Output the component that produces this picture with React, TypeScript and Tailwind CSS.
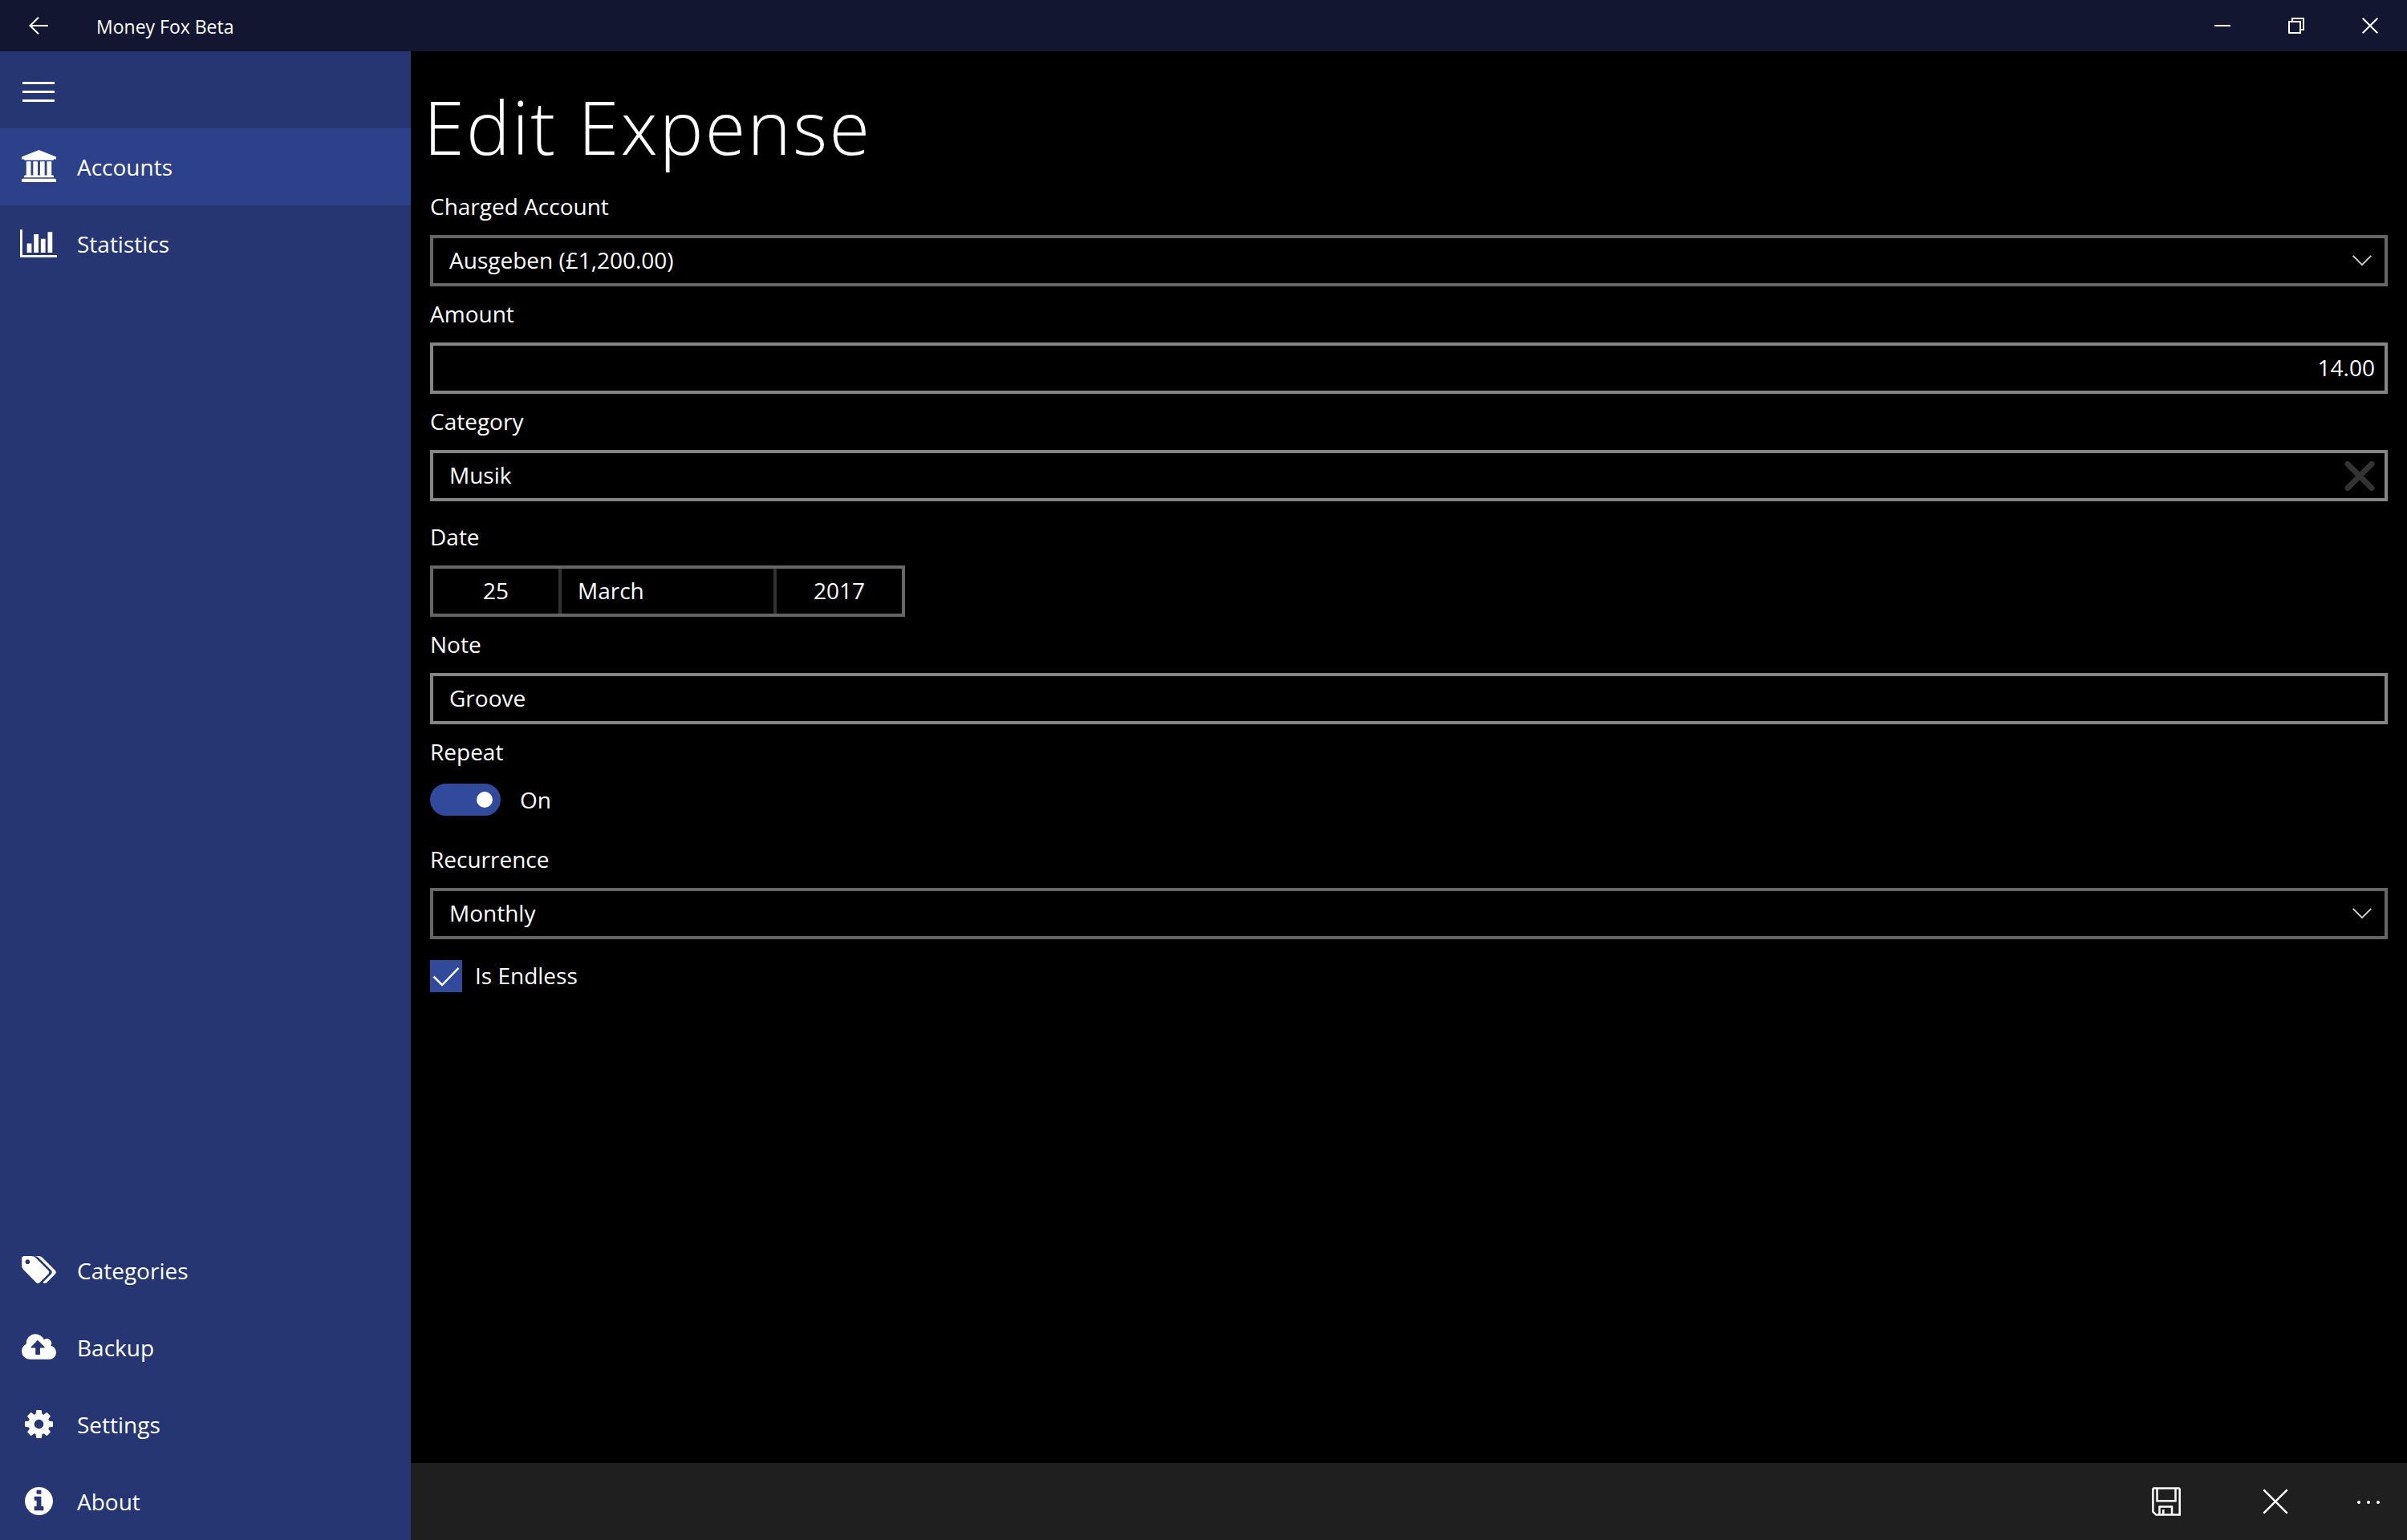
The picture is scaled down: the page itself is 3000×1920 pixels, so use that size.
import { useState, type ReactNode } from "react";

function Glyph({ box, path, className }: { box: string; path: string; className: string }) {
  return (
    <svg viewBox={box} className={className} fill="currentColor" aria-hidden="true">
      <path d={path} />
    </svg>
  );
}

const BankIcon = () => (
  <Glyph
    box="32 128 1920 1792"
    className="h-10 w-[43px]"
    path="M992 128l960 384v128h-128q0 26-20.5 45t-48.5 19h-1526q-28 0-48.5-19t-20.5-45h-128v-128zm-704 640h256v768h128v-768h256v768h128v-768h256v768h128v-768h256v768h59q28 0 48.5 19t20.5 45v64h-1664v-64q0-26 20.5-45t48.5-19h59v-768zm1595 960q28 0 48.5 19t20.5 45v128h-1920v-128q0-26 20.5-45t48.5-19h1782z"
  />
);

const ChartIcon = () => (
  <Glyph
    box="0 128 2048 1536"
    className="h-[35px] w-[46px]"
    path="M640 896v512h-256v-512h256zm384-512v1024h-256v-1024h256zm1024 1152v128h-2048v-1536h128v1408h1920zm-640-896v768h-256v-768h256zm384-384v1152h-256v-1152h256z"
  />
);

const TagsIcon = () => (
  <Glyph
    box="0 128 1899 1515"
    className="h-[34px] w-[43px]"
    path="M448 448q0-53-37.5-90.5t-90.5-37.5-90.5 37.5-37.5 90.5 37.5 90.5 90.5 37.5 90.5-37.5 37.5-90.5zm1067 576q0 53-37 90l-491 492q-39 37-91 37-53 0-90-37l-715-716q-38-37-64.5-101t-26.5-117v-416q0-52 38-90t90-38h416q53 0 117 26.5t102 64.5l715 714q37 39 37 91zm384 0q0 53-37 90l-491 492q-39 37-91 37-36 0-59-14t-53-45l470-470q37-37 37-90 0-52-37-91l-715-714q-38-38-102-64.5t-117-26.5h224q53 0 117 26.5t102 64.5l715 714q37 39 37 91z"
  />
);

const CloudIcon = () => (
  <Glyph
    box="0 128 1920 1408"
    className="h-8 w-[43px]"
    path="M1280 864q0-14-9-23l-352-352q-9-9-23-9t-23 9l-351 351q-10 12-10 24 0 14 9 23t23 9h224v352q0 13 9.5 22.5t22.5 9.5h192q13 0 22.5-9.5t9.5-22.5v-352h224q13 0 22.5-9.5t9.5-22.5zm640 288q0 159-112.5 271.5t-271.5 112.5h-1088q-185 0-316.5-131.5t-131.5-316.5q0-130 70-240t188-165q-2-30-2-43 0-212 150-362t362-150q156 0 285.5 87t188.5 231q71-62 166-62 106 0 181 75t75 181q0 76-41 138 130 31 213.5 135.5t83.5 238.5z"
  />
);

const CogIcon = () => (
  <Glyph
    box="128 128 1536 1536"
    className="h-[35px] w-[35px]"
    path="M1152 896q0-106-75-181t-181-75-181 75-75 181 75 181 181 75 181-75 75-181zm512-109v222q0 12-8 23t-20 13l-185 28q-19 54-39 91 35 50 107 138 10 12 10 25t-9 23q-27 37-99 108t-94 71q-12 0-26-9l-138-108q-44 23-91 38-16 136-29 186-7 28-36 28h-222q-14 0-24.5-8.5t-11.5-21.5l-28-184q-49-16-90-37l-141 107q-10 9-25 9-14 0-25-11-126-114-165-168-7-10-7-23 0-12 8-23 15-21 51-66.5t54-70.5q-27-50-41-99l-183-27q-13-2-21-12.5t-8-23.5v-222q0-12 8-23t19-13l186-28q14-46 39-92-40-57-107-138-10-12-10-24 0-10 9-23 26-36 98.5-107.5t94.5-71.5q13 0 26 10l138 107q44-23 91-38 16-136 29-186 7-28 36-28h222q14 0 24.5 8.5t11.5 21.5l28 184q49 16 90 37l142-107q9-9 24-9 13 0 25 10 129 119 165 170 7 8 7 22 0 12-8 23-15 21-51 66.5t-54 70.5q26 50 41 98l183 28q13 2 21 12.5t8 23.5z"
  />
);

const InfoIcon = () => (
  <Glyph
    box="128 128 1536 1536"
    className="h-[35px] w-[35px]"
    path="M1152 1376v-160q0-14-9-23t-23-9h-96v-512q0-14-9-23t-23-9h-320q-14 0-23 9t-9 23v160q0 14 9 23t23 9h96v320h-96q-14 0-23 9t-9 23v160q0 14 9 23t23 9h448q14 0 23-9t9-23zm-128-896v-160q0-14-9-23t-23-9h-192q-14 0-23 9t-9 23v160q0 14 9 23t23 9h192q14 0 23-9t9-23zm640 416q0 209-103 385.5t-279.5 279.5-385.5 103-385.5-103-279.5-279.5-103-385.5 103-385.5 279.5-279.5 385.5-103 385.5 103 279.5 279.5 103 385.5z"
  />
);

function NavItem({ icon, label, active = false }: { icon: ReactNode; label: string; active?: boolean }) {
  return (
    <li>
      <a
        href="#"
        aria-current={active ? "page" : undefined}
        className={active ? "flex h-24 items-center bg-[#2c418a]" : "flex h-24 items-center"}
      >
        <span className="flex w-24 shrink-0 justify-center pb-0.5">{icon}</span>
        <span>{label}</span>
      </a>
    </li>
  );
}

function TitleBar() {
  return (
    <header className="flex h-16 items-center bg-[#121630]">
      <button type="button" aria-label="Back" className="flex h-16 w-24 items-center justify-center">
        <svg viewBox="0 0 24 22" className="h-[22px] w-6" fill="none" stroke="currentColor" strokeWidth="2" aria-hidden="true">
          <path d="M24 11H1.500M12 .7 1.500 11 12 21.300" />
        </svg>
      </button>
      <span className="flex-1 pt-0.5 pl-6 text-[23px]">Money Fox Beta</span>
      <button type="button" aria-label="Minimize" className="flex h-16 w-[92px] items-center justify-center">
        <svg viewBox="0 0 20 20" className="h-5 w-5" fill="none" stroke="currentColor" strokeWidth="2" aria-hidden="true">
          <path d="M0 10h20" />
        </svg>
      </button>
      <button type="button" aria-label="Restore" className="flex h-16 w-[92px] items-center justify-center">
        <svg viewBox="0 0 20 20" className="h-5 w-5" fill="none" stroke="currentColor" strokeWidth="2" aria-hidden="true">
          <path d="M1 5h14v14H1zM5 5V1h14v14h-4" />
        </svg>
      </button>
      <button type="button" aria-label="Close" className="flex h-16 w-[92px] items-center justify-center">
        <svg viewBox="0 0 20 20" className="h-5 w-5" fill="none" stroke="currentColor" strokeWidth="2" aria-hidden="true">
          <path d="M.7.7l18.600 18.600M19.300.7.7 19.300" />
        </svg>
      </button>
    </header>
  );
}

function Sidebar() {
  return (
    <nav aria-label="Main" className="flex w-[512px] shrink-0 flex-col bg-[#263672]">
      <button type="button" aria-label="Toggle menu" className="flex h-24 w-24 items-center justify-center">
        <svg viewBox="0 0 40 30" className="h-[30px] w-10" fill="currentColor" aria-hidden="true">
          <path d="M0 5h40v3H0zM0 16h40v3H0zM0 27h40v3H0z" />
        </svg>
      </button>
      <ul>
        <NavItem icon={<BankIcon />} label="Accounts" active />
        <NavItem icon={<ChartIcon />} label="Statistics" />
      </ul>
      <ul className="mt-auto">
        <NavItem icon={<TagsIcon />} label="Categories" />
        <NavItem icon={<CloudIcon />} label="Backup" />
        <NavItem icon={<CogIcon />} label="Settings" />
        <NavItem icon={<InfoIcon />} label="About" />
      </ul>
    </nav>
  );
}

function Field({ id, label, children }: { id: string; label: string; children: ReactNode }) {
  return (
    <div className="flex flex-col gap-4">
      <label htmlFor={id} className="self-start pb-0.5 leading-9">
        {label}
      </label>
      {children}
    </div>
  );
}

function SelectBox({ id, options }: { id: string; options: string[] }) {
  return (
    <div className="relative">
      <select
        id={id}
        className="block h-16 w-full appearance-none rounded-none border-4 border-[#666666] bg-black px-5 pb-0.5 text-white"
      >
        {options.map((option) => (
          <option key={option}>{option}</option>
        ))}
      </select>
      <svg
        viewBox="0 0 24 14"
        className="pointer-events-none absolute inset-y-0 right-5 my-auto h-3.5 w-6"
        fill="none"
        stroke="#cccccc"
        strokeWidth="2"
        aria-hidden="true"
      >
        <path d="M.7.9 12 12.200 23.300.9" />
      </svg>
    </div>
  );
}

function ExpenseForm() {
  const [category, setCategory] = useState("Musik");
  const [repeat, setRepeat] = useState(true);
  const [endless, setEndless] = useState(true);

  return (
    <form className="flex flex-col gap-4 px-6">
      <Field id="account" label="Charged Account">
        <SelectBox id="account" options={["Ausgeben (£1,200.00)"]} />
      </Field>
      <Field id="amount" label="Amount">
        <input
          id="amount"
          type="text"
          defaultValue="14.00"
          className="h-16 w-full border-4 border-[#858585] bg-black px-3 pb-0.5 text-right"
        />
      </Field>
      <Field id="category" label="Category">
        <div className="relative">
          <input
            id="category"
            type="text"
            value={category}
            onChange={(event) => setCategory(event.target.value)}
            className="block h-16 w-full border-4 border-[#858585] bg-black pr-20 pb-0.5 pl-5"
          />
          <button
            type="button"
            aria-label="Clear category"
            onClick={() => setCategory("")}
            className="absolute inset-y-0 right-4 flex items-center"
          >
            <svg viewBox="0 0 38 38" className="h-[38px] w-[38px]" fill="none" stroke="#333333" strokeWidth="7" strokeLinecap="round" aria-hidden="true">
              <path d="M4 4.500l30 30M34 4.500 4 34.500" />
            </svg>
          </button>
        </div>
      </Field>
      <fieldset className="flex flex-col gap-4 pt-2.5">
        <legend className="contents">
          <span className="pb-0.5 leading-9">Date</span>
        </legend>
        <div className="flex h-16 w-[592px] border-4 border-[#666666]">
          <button type="button" className="w-[156px] pb-0.5">
            25
          </button>
          <button type="button" className="flex-1 border-x-4 border-[#333333] px-5 pb-0.5 text-left">
            March
          </button>
          <button type="button" className="w-[156px] pb-0.5">
            2017
          </button>
        </div>
      </fieldset>
      <Field id="note" label="Note">
        <input id="note" type="text" defaultValue="Groove" className="h-16 w-full border-4 border-[#858585] bg-black px-5 pb-0.5" />
      </Field>
      <Field id="repeat" label="Repeat">
        <div className="flex h-16 items-start gap-6 pt-1">
          <span className="relative flex h-10 w-[88px]">
            <input
              id="repeat"
              type="checkbox"
              role="switch"
              checked={repeat}
              onChange={(event) => setRepeat(event.target.checked)}
              className="h-10 w-[88px] appearance-none rounded-full border-4 border-[#858585] checked:border-[#314a9b] checked:bg-[#314a9b]"
            />
            <span
              className={
                repeat
                  ? "pointer-events-none absolute inset-y-2.5 right-2.5 w-5 rounded-full bg-white"
                  : "pointer-events-none absolute inset-y-2.5 left-2.5 w-5 rounded-full bg-white"
              }
            />
          </span>
          <span className="leading-10">{repeat ? "On" : "Off"}</span>
        </div>
      </Field>
      <Field id="recurrence" label="Recurrence">
        <SelectBox id="recurrence" options={["Monthly", "Daily", "Weekly", "Yearly"]} />
      </Field>
      <label className="mt-2.5 flex items-center gap-4 self-start">
        <span className="relative flex h-10 w-10">
          <input
            type="checkbox"
            checked={endless}
            onChange={(event) => setEndless(event.target.checked)}
            className="h-10 w-10 appearance-none border-4 border-[#858585] checked:border-[#314a9b] checked:bg-[#314a9b]"
          />
          {endless && (
            <svg viewBox="0 0 40 40" className="pointer-events-none absolute inset-0" fill="none" stroke="currentColor" strokeWidth="2.500" aria-hidden="true">
              <path d="M4.500 20.500 15 31 35.500 9.800" />
            </svg>
          )}
        </span>
        <span className="pb-0.5 leading-9">Is Endless</span>
      </label>
    </form>
  );
}

function CommandBar() {
  return (
    <footer className="mt-auto flex h-24 justify-end bg-[#1f1f1f]">
      <button type="button" aria-label="Save" className="flex w-[136px] items-center justify-center">
        <svg viewBox="0 0 36 36" className="h-9 w-9" fill="none" stroke="currentColor" strokeWidth="2.500" aria-hidden="true">
          <path d="M2.300 1.400h31.400l1 1v32.200H5.200l-3.800-3.800V2.300z" />
          <path d="M6.500 2v15.200h23V2" />
          <path d="M9.500 34V24.500h15.500V34M14.300 34v-6" />
        </svg>
      </button>
      <button type="button" aria-label="Cancel" className="flex w-[136px] items-center justify-center">
        <svg viewBox="0 0 32 32" className="h-8 w-8" fill="none" stroke="currentColor" strokeWidth="2.500" aria-hidden="true">
          <path d="M1.300 1.300l29.400 29.400M30.700 1.300 1.300 30.700" />
        </svg>
      </button>
      <button type="button" aria-label="More" className="flex w-24 items-center justify-center">
        <svg viewBox="0 0 28 6" className="h-1.5 w-7" fill="currentColor" aria-hidden="true">
          <circle cx="2" cy="4" r="2" />
          <circle cx="14" cy="4" r="2" />
          <circle cx="26" cy="4" r="2" />
        </svg>
      </button>
    </footer>
  );
}

export default function App() {
  return (
    <div className="flex min-h-screen flex-col bg-black font-['Open_Sans','Noto_Sans',sans-serif] text-[28px] leading-10 text-white">
      <TitleBar />
      <div className="flex flex-1">
        <Sidebar />
        <main className="flex min-w-0 flex-1 flex-col">
          <h1 className="px-4 pt-[38px] pb-[25px] text-[92px] leading-[112px] font-light tracking-wide">Edit Expense</h1>
          <ExpenseForm />
          <CommandBar />
        </main>
      </div>
    </div>
  );
}
